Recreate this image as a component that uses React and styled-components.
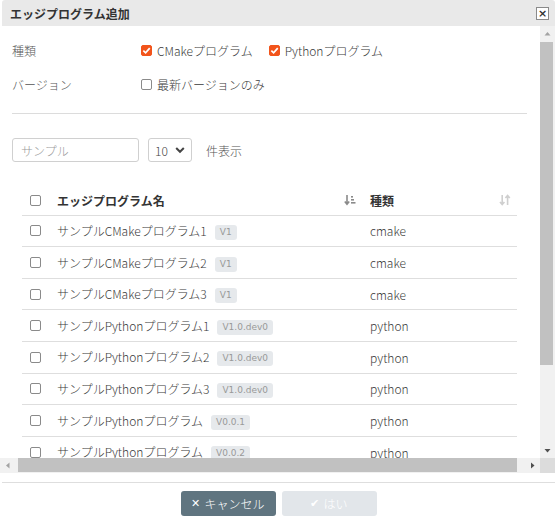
import React from "react";
import styled, { createGlobalStyle } from "styled-components";

const GlobalStyle = createGlobalStyle`
    html, body {
        margin: 0;
        padding: 0;
        background: #ffffff;
    }
    body {
        font-family: "Noto Sans CJK JP", "Noto Sans", sans-serif;
        font-size: 12px;
        font-weight: 300;
        color: #3a3a3a;
    }
`;

const rows = [
    { name: "サンプルCMakeプログラム1", version: "V1", type: "cmake" },
    { name: "サンプルCMakeプログラム2", version: "V1", type: "cmake" },
    { name: "サンプルCMakeプログラム3", version: "V1", type: "cmake" },
    { name: "サンプルPythonプログラム1", version: "V1.0.dev0", type: "python" },
    { name: "サンプルPythonプログラム2", version: "V1.0.dev0", type: "python" },
    { name: "サンプルPythonプログラム3", version: "V1.0.dev0", type: "python" },
    { name: "サンプルPythonプログラム", version: "V0.0.1", type: "python" },
    { name: "サンプルPythonプログラム", version: "V0.0.2", type: "python" },
    { name: "サンプルPythonプログラム", version: "V0.0.3", type: "python" },
    { name: "サンプルPythonプログラム", version: "V0.0.4", type: "python" },
];

const CheckMark = () => (
    <svg width="9" height="9" viewBox="0 0 10 10">
        <path d="M1.5 5.2 L4 7.6 L8.6 2.4" fill="none" stroke="#fff" strokeWidth="1.9" />
    </svg>
);

const SortActive = () => (
    <svg width="12" height="12" viewBox="0 0 12 12">
        <path d="M3 1 V10 M0.8 7.6 L3 10.2 L5.2 7.6" fill="none" stroke="#8a8a8a" strokeWidth="1.6" />
        <rect x="7" y="2" width="2" height="1.6" fill="#8a8a8a" />
        <rect x="7" y="5" width="3" height="1.6" fill="#8a8a8a" />
        <rect x="7" y="8" width="4.5" height="1.6" fill="#8a8a8a" />
    </svg>
);

const SortIdle = () => (
    <svg width="12" height="12" viewBox="0 0 12 12">
        <path d="M3.2 1 V10.5 M1 8 L3.2 10.6 L5.4 8" fill="none" stroke="#cfcfcf" strokeWidth="1.6" />
        <path d="M8.6 11 V1.5 M6.4 4 L8.6 1.4 L10.8 4" fill="none" stroke="#cfcfcf" strokeWidth="1.6" />
    </svg>
);

// small scrollbar arrow triangles
const arrowPoints = {
    up: "0.5,4.5 3.5,1 6.5,4.5",
    down: "0.5,1 6.5,1 3.5,4.5",
    left: "4.5,0.5 1,3.5 4.5,6.5",
    right: "1,0.5 4.5,3.5 1,6.5",
};

const Arrow = ({ dir, dark }) => {
    const vertical = dir === "up" || dir === "down";
    return (
        <ArrowButton>
            <svg width={vertical ? 7 : 6} height={vertical ? 6 : 7} viewBox={vertical ? "0 0 7 6" : "0 0 6 7"}>
                <polygon points={arrowPoints[dir]} fill={dark ? "#505050" : "#a3a3a3"} />
            </svg>
        </ArrowButton>
    );
};

const App = () => {
    return (
        <>
            <GlobalStyle />
            <Dialog>
                <Header>
                    <Title>エッジプログラム追加</Title>
                    <CloseButton>×</CloseButton>
                </Header>
                <Body>
                    <Viewport>
                        <Content>
                            <FormRow>
                                <FormLabel>種類</FormLabel>
                                <Options>
                                    <Option>
                                        <Box checked>
                                            <CheckMark />
                                        </Box>
                                        CMakeプログラム
                                    </Option>
                                    <Option>
                                        <Box checked>
                                            <CheckMark />
                                        </Box>
                                        Pythonプログラム
                                    </Option>
                                </Options>
                            </FormRow>
                            <FormRow>
                                <FormLabel>バージョン</FormLabel>
                                <Options>
                                    <Option>
                                        <Box />
                                        最新バージョンのみ
                                    </Option>
                                </Options>
                            </FormRow>
                            <Divider />
                            <Toolbar>
                                <Search placeholder="サンプル" />
                                <Select>
                                    10
                                    <svg width="10" height="8" viewBox="0 0 10 8">
                                        <path d="M1.2 2 L5 5.8 L8.8 2" fill="none" stroke="#444" strokeWidth="2" />
                                    </svg>
                                </Select>
                                <Unit>件表示</Unit>
                            </Toolbar>
                            <Table>
                                <thead>
                                    <tr>
                                        <CheckCell as="th" $head>
                                            <Box />
                                        </CheckCell>
                                        <HeadCell>
                                            <HeadInner>
                                                エッジプログラム名
                                                <SortActive />
                                            </HeadInner>
                                        </HeadCell>
                                        <HeadCell $type>
                                            <HeadInner>
                                                種類
                                                <SortIdle />
                                            </HeadInner>
                                        </HeadCell>
                                    </tr>
                                </thead>
                                <tbody>
                                    {rows.map((row, i) => (
                                        <tr key={i}>
                                            <CheckCell>
                                                <Box />
                                            </CheckCell>
                                            <Cell>
                                                {row.name}
                                                <Badge>{row.version}</Badge>
                                            </Cell>
                                            <Cell $type>{row.type}</Cell>
                                        </tr>
                                    ))}
                                </tbody>
                            </Table>
                        </Content>
                    </Viewport>
                    <VBar>
                        <Arrow dir="up" />
                        <Track>
                            <VThumb />
                        </Track>
                        <Arrow dir="down" dark />
                    </VBar>
                    <HBar>
                        <Arrow dir="left" />
                        <Track $horizontal>
                            <HThumb />
                        </Track>
                        <Arrow dir="right" dark />
                    </HBar>
                    <Corner />
                </Body>
                <Footer>
                    <CancelButton>
                        <ButtonIcon>✕</ButtonIcon>
                        キャンセル
                    </CancelButton>
                    <OkButton disabled>
                        <ButtonIcon>✔</ButtonIcon>
                        はい
                    </OkButton>
                </Footer>
            </Dialog>
        </>
    );
};

const Dialog = styled.div`
    width: 557px;
    height: 525px;
    display: flex;
    flex-direction: column;
    background: #fff;
    overflow: hidden;
`;

const Header = styled.div`
    height: 26px;
    flex: none;
    margin: 0 2px;
    display: flex;
    align-items: center;
    justify-content: space-between;
    padding: 0 6px 0 8px;
    background: #e9e9e9;
    border-radius: 3px 3px 0 0;
`;

const Title = styled.div`
    font-weight: bold;
    font-size: 12px;
    color: #333;
`;

const CloseButton = styled.button`
    width: 13px;
    height: 13px;
    padding: 0;
    border: 1px solid #8a8a8a;
    background: #fff;
    color: #333;
    font-size: 11px;
    font-weight: bold;
    line-height: 9px;
    font-family: "DejaVu Sans", sans-serif;
`;

const Body = styled.div`
    height: 447px;
    flex: none;
    display: grid;
    grid-template-columns: 540px 15px;
    grid-template-rows: 432px 15px;
`;

const Viewport = styled.div`
    overflow: hidden;
`;

const VBar = styled.div`
    display: flex;
    flex-direction: column;
    background: #f1f1f1;
`;

const HBar = styled.div`
    display: flex;
    background: #f1f1f1;
`;

const ArrowButton = styled.div`
    width: 15px;
    height: 15px;
    flex: none;
    display: flex;
    align-items: center;
    justify-content: center;
`;

const Track = styled.div`
    flex: 1;
    display: flex;
    flex-direction: ${(p) => (p.$horizontal ? "row" : "column")};
`;

const VThumb = styled.div`
    width: 13px;
    height: 323px;
    margin-top: 1px;
    background: #c1c1c1;
`;

const HThumb = styled.div`
    width: 499px;
    height: 14px;
    margin-left: 3px;
    background: #c1c1c1;
`;

const Corner = styled.div`
    background: #dcdcdc;
`;

const Content = styled.div`
    width: 540px;
    padding: 7px 13px 30px 12px;
    box-sizing: border-box;
`;

const FormRow = styled.div`
    display: flex;
    align-items: center;
    height: 34px;
`;

const FormLabel = styled.div`
    width: 129px;
    color: #555;
`;

const Options = styled.div`
    display: flex;
    gap: 16px;
`;

const Option = styled.label`
    display: flex;
    align-items: center;
    gap: 5px;
`;

const Box = styled.span`
    width: 11px;
    height: 11px;
    flex: none;
    box-sizing: border-box;
    display: inline-flex;
    align-items: center;
    justify-content: center;
    border-radius: 2px;
    border: 1px solid ${(p) => (p.checked ? "#f2541b" : "#8a8a8a")};
    background: ${(p) => (p.checked ? "#f2541b" : "#fff")};
`;

const Divider = styled.div`
    width: 515px;
    height: 1px;
    background: #dcdcdc;
    margin: 12px 0 24px;
`;

const Toolbar = styled.div`
    display: flex;
    align-items: center;
    gap: 9px;
    height: 24px;
    color: #555;
`;

const Unit = styled.span`
    margin-left: 5px;
`;

const Search = styled.input`
    width: 127px;
    height: 24px;
    box-sizing: border-box;
    border: 1px solid #d0d0d0;
    border-radius: 3px;
    padding: 0 8px;
    font: inherit;
    font-size: 12px;

    &::placeholder {
        color: #9a9a9a;
    }
`;

const Select = styled.div`
    width: 44px;
    height: 24px;
    box-sizing: border-box;
    border: 1px solid #d0d0d0;
    border-radius: 3px;
    display: flex;
    align-items: center;
    justify-content: space-between;
    padding: 0 6px 0 6px;
    color: #444;
`;

const Table = styled.table`
    margin: 24px 0 0 10px;
    width: 495px;
    border-collapse: collapse;
`;

const CheckCell = styled.td`
    width: 27px;
    padding: 0 0 0 8px;
    border-bottom: 1px solid #dedede;
    text-align: left;
    vertical-align: middle;
    height: ${(p) => (p.$head ? "28.7px" : "30.6px")};
`;

const HeadCell = styled.th`
    text-align: left;
    font-weight: bold;
    color: #333;
    height: 28.7px;
    border-bottom: 1px solid #dedede;
    padding: 0 6px 0 ${(p) => (p.$type ? "8px" : "0")};
    width: ${(p) => (p.$type ? "141px" : "auto")};
`;

const HeadInner = styled.div`
    display: flex;
    align-items: center;
    justify-content: space-between;
`;

const Cell = styled.td`
    height: 30.6px;
    padding: 0 0 0 ${(p) => (p.$type ? "8px" : "0")};
    border-bottom: 1px solid #dedede;
    white-space: nowrap;
`;

const Badge = styled.span`
    display: inline-block;
    margin-left: 8px;
    padding: 0 5px;
    line-height: 15px;
    font-family: "DejaVu Sans", sans-serif;
    font-weight: normal;
    font-size: 9px;
    border-radius: 3px;
    background: #e6e9ec;
    color: #999;
    vertical-align: 1px;
`;

const Footer = styled.div`
    flex: 1;
    margin: 9px 2px 0;
    border-top: 1px solid #dedede;
    display: flex;
    justify-content: center;
    gap: 6px;
    padding-top: 8px;
`;

const CancelButton = styled.button`
    width: 95px;
    height: 25px;
    border: none;
    border-radius: 3px;
    background: #607580;
    color: #fff;
    font: inherit;
    font-size: 12px;
    display: flex;
    align-items: center;
    justify-content: center;
    gap: 4px;
`;

const OkButton = styled(CancelButton)`
    background: #e2e6ea;
    color: #fff;
`;

const ButtonIcon = styled.span`
    font-size: 11px;
    font-family: "DejaVu Sans", sans-serif;
`;

export default App;
